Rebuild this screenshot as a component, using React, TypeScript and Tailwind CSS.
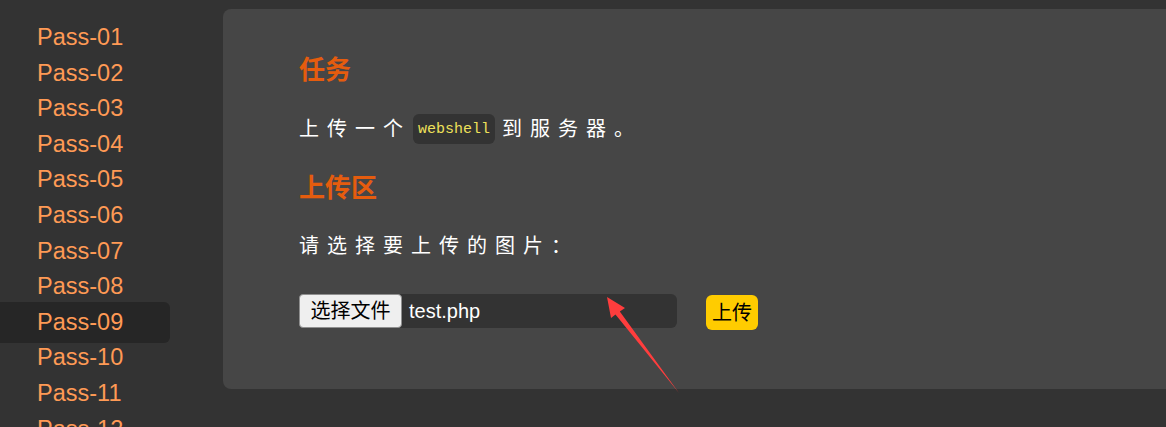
import React from 'react';

const passes = Array.from({ length: 12 }, (_, i) => `Pass-${String(i + 1).padStart(2, '0')}`);
const activePass = 'Pass-09';

const sans = { fontFamily: '"Liberation Sans", "Noto Sans CJK SC", sans-serif' };

function Sidebar() {
  return (
    <nav className="w-[223px] shrink-0 pt-[20px]">
      {passes.map((name) =>
        name === activePass ? (
          <div
            key={name}
            className="w-[170px] -my-[3px] py-[3px] rounded-r-[6px] bg-[#262626] pl-[37px] text-[23.5px] leading-[35.6px] text-[#ff9a55]"
          >
            {name}
          </div>
        ) : (
          <div key={name} className="pl-[37px] text-[23.5px] leading-[35.6px] text-[#ff9a55]">
            {name}
          </div>
        )
      )}
    </nav>
  );
}

function UploadArrow() {
  return (
    <svg className="pointer-events-none absolute left-0 top-0 h-full w-full" viewBox="0 0 1166 427">
      <polygon
        points="607,297 611,318 615.5,314.6 679,393 619.8,311.4 625,308"
        fill="#ff3d3d"
      />
    </svg>
  );
}

export default function App() {
  return (
    <div className="relative flex h-[427px] w-full overflow-hidden bg-[#333333]" style={sans}>
      <Sidebar />

      <main className="flex-1 pt-[9px]">
        <section className="-mr-[20px] h-[380px] rounded-[8px] bg-[#464646] pl-[76px] pt-[44px] text-white">
          <h2 className="flex h-[34px] items-center text-[26px] font-bold leading-none text-[#e55c0e]">任务</h2>

          <p className="mt-[27px] flex h-[30px] items-center text-[20px] leading-none tracking-[8px]">
            <span>上传一个</span>
            <code
              className="ml-[2px] mr-[7px] flex h-[30px] items-center rounded-[6px] bg-[#333333] px-[5px] text-[15px] tracking-normal text-[#eee05a]"
              style={{ fontFamily: '"Liberation Mono", monospace' }}
            >
              webshell
            </code>
            <span>到服务器。</span>
          </p>

          <h2 className="mt-[27px] flex h-[34px] items-center text-[26px] font-bold leading-none text-[#e55c0e]">上传区</h2>

          <p className="mt-[26px] flex h-[30px] items-center text-[20px] leading-none tracking-[8px]">请选择要上传的图片：</p>

          <form className="mt-[33px] flex h-[35px] items-start" onSubmit={(e) => e.preventDefault()}>
            <div className="flex h-[34px] w-[378px] items-center rounded-[6px] bg-[#333333]">
              <button
                type="button"
                className="h-[34px] w-[103px] rounded-[4px] border border-[#8f8f8f] bg-[#efefef] text-[20px] leading-none text-black"
              >
                选择文件
              </button>
              <span className="pl-[7px] text-[20px] leading-none text-white">test.php</span>
            </div>
            <button
              type="submit"
              className="ml-[29px] mt-[1px] h-[35px] w-[52px] rounded-[6px] bg-[#ffcc00] text-[20px] leading-none text-black"
            >
              上传
            </button>
          </form>
        </section>
      </main>

      <UploadArrow />
    </div>
  );
}
